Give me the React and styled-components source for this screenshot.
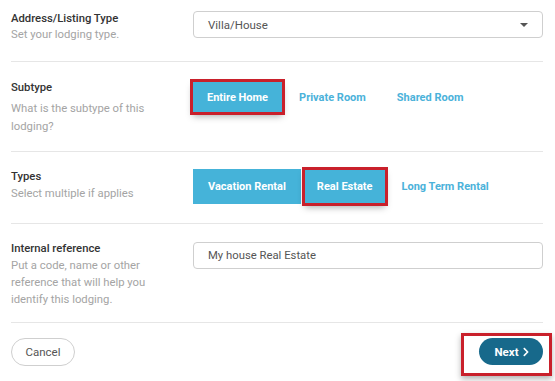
import styled, { createGlobalStyle } from "styled-components";
import { FaChevronRight } from "react-icons/fa";

const GlobalStyle = createGlobalStyle`
  body {
    margin: 0;
    background: #fff;
    font-family: Roboto, "Liberation Sans", sans-serif;
  }
`;

const Page = styled.div`
  width: 555px;
  height: 381px;
  overflow: hidden;
  background: #fff;
`;

const Form = styled.div`
  padding: 0 12px 0 11px;
`;

const Row = styled.div`
  display: grid;
  grid-template-columns: 182px 1fr;
  align-items: start;
  padding: ${(p) => p.$pad};
  border-bottom: 1px solid #e6e6e6;
`;

const Info = styled.div`
  max-width: 150px;
`;

const Label = styled.div`
  font-size: 11.3px;
  line-height: 16px;
  font-weight: 500;
  color: #333;
`;

const Hint = styled.div`
  font-size: 11.3px;
  line-height: ${(p) => p.$lh || 16}px;
  margin-top: ${(p) => p.$mt || 0}px;
  color: #a4a4a4;
`;

const Field = styled.div`
  margin-top: ${(p) => p.$mt || 0}px;
`;

const SelectBox = styled.div`
  height: 27px;
  border: 1px solid #cfcfcf;
  border-radius: 4px;
  display: flex;
  align-items: center;
  padding: 0 14px;
  font-size: 11.5px;
  color: #555;
  box-sizing: border-box;
`;

const Caret = styled.span`
  margin-left: auto;
  width: 0;
  height: 0;
  border-left: 4px solid transparent;
  border-right: 4px solid transparent;
  border-top: 4px solid #555;
`;

const TextInput = styled.input`
  width: 100%;
  height: 27px;
  box-sizing: border-box;
  border: 1px solid #cfcfcf;
  border-radius: 4px;
  padding: 0 14px;
  font-family: inherit;
  font-size: 11.3px;
  color: #555;
  outline: none;
`;

const Choices = styled.div`
  display: flex;
  align-items: center;
  gap: ${(p) => p.$gap}px;
`;

const Choice = styled.button`
  height: ${(p) => p.$h}px;
  padding: 0 ${(p) => p.$px || 14}px;
  border: none;
  border-radius: 0;
  font-family: inherit;
  font-size: 11px;
  font-weight: 700;
  cursor: pointer;
  background: ${(p) => (p.$active ? "#45b3d9" : "transparent")};
  color: ${(p) => (p.$active ? "#fff" : "#4bb2da")};
  ${(p) =>
    p.$marked &&
    `
    outline: 3px solid #c9202b;
    box-shadow: 0 4px 7px rgba(0, 0, 0, 0.35);
  `}
`;

const Footer = styled.div`
  display: flex;
  justify-content: space-between;
  align-items: flex-start;
  padding: 10px 3px 0 11px;
`;

const Cancel = styled.button`
  margin-top: 5px;
  height: 28px;
  width: 64px;
  border: 1px solid #cfcfcf;
  border-radius: 14px;
  background: #fff;
  font-family: inherit;
  font-size: 11.5px;
  color: #555;
`;

const Highlight = styled.div`
  border: 3px solid #c9202b;
  padding: 2px 6px 8px 15px;
  box-shadow: 0 3px 6px rgba(0, 0, 0, 0.3);
`;

const Next = styled.button`
  height: 27px;
  width: 64px;
  border: none;
  border-radius: 14px;
  background: #17698b;
  color: #fff;
  font-family: inherit;
  font-size: 11.5px;
  font-weight: 700;
  display: flex;
  align-items: center;
  justify-content: center;
  gap: 3px;
  padding: 0 0 0 2px;

  svg {
    width: 8px;
    height: 10px;
  }
`;

export default function App() {
  return (
    <Page>
      <GlobalStyle />
      <Form>
        <Row $pad="11px 0 18px">
          <Info>
            <Label>Address/Listing Type</Label>
            <Hint>Set your lodging type.</Hint>
          </Info>
          <SelectBox>
            Villa/House
            <Caret />
          </SelectBox>
        </Row>

        <Row $pad="18px 0 15px">
          <Info>
            <Label>Subtype</Label>
            <Hint $lh={18} $mt={4}>What is the subtype of this lodging?</Hint>
          </Info>
          <Field $mt={2}>
            <Choices $gap={3}>
              <Choice $h={30} $active $marked>Entire Home</Choice>
              <Choice $h={30}>Private Room</Choice>
              <Choice $h={30}>Shared Room</Choice>
            </Choices>
          </Field>
        </Row>

        <Row $pad="17px 0 19px">
          <Info>
            <Label>Types</Label>
            <Hint $mt={1}>Select multiple if applies</Hint>
          </Info>
          <Choices $gap={4}>
            <Choice $h={35} $px={15} $active>Vacation Rental</Choice>
            <Choice $h={33} $px={12} $active $marked>Real Estate</Choice>
            <Choice $h={35} $px={13}>Long Term Rental</Choice>
          </Choices>
        </Row>

        <Row $pad="17px 0 14px">
          <Info>
            <Label>Internal reference</Label>
            <Hint $lh={17}>
              Put a code, name or other reference that will help you identify this lodging.
            </Hint>
          </Info>
          <Field $mt={1}>
            <TextInput defaultValue="My house Real Estate" />
          </Field>
        </Row>
      </Form>

      <Footer>
        <Cancel>Cancel</Cancel>
        <Highlight>
          <Next>
            Next <FaChevronRight />
          </Next>
        </Highlight>
      </Footer>
    </Page>
  );
}
